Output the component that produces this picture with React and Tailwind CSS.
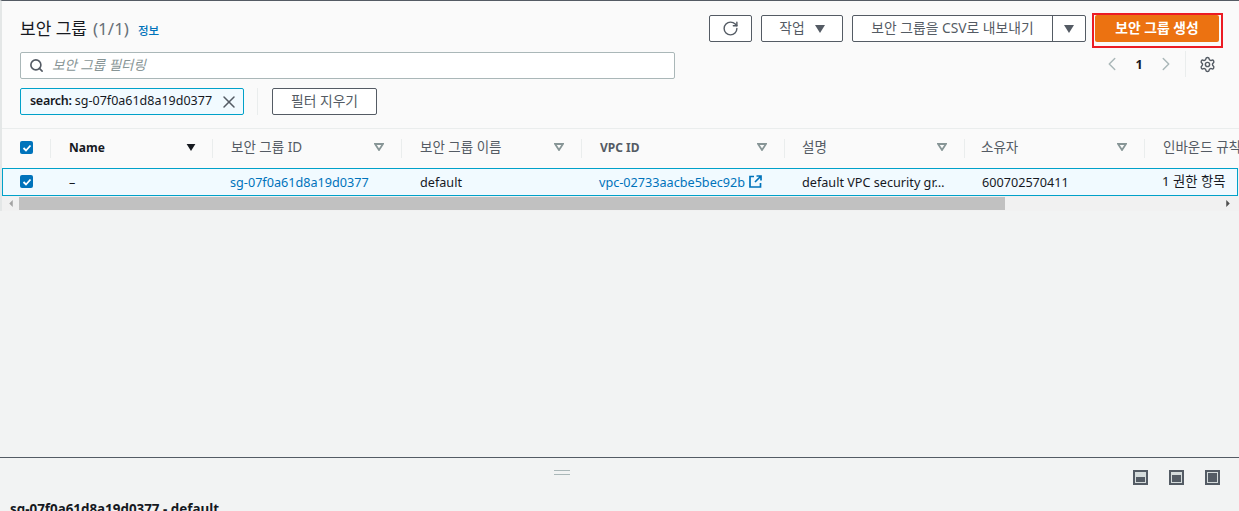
import { RotateCw, Search, X, ChevronLeft, ChevronRight, Settings } from 'lucide-react'

const font = { sans: 'font-["Noto_Sans","Noto_Sans_CJK_KR",sans-serif]' }

const columns = [
  { label: 'Name', width: 'w-[162px]', pad: 'pl-[18px] pr-[16px]', bold: true, active: true },
  { label: '보안 그룹 ID', width: 'w-[189px]', pad: 'pl-[18px] pr-[17px]' },
  { label: '보안 그룹 이름', width: 'w-[180px]', pad: 'pl-[18px] pr-[17px]' },
  { label: 'VPC ID', width: 'w-[203px]', pad: 'pl-[18px] pr-[17px]', semi: true },
  { label: '설명', width: 'w-[180px]', pad: 'pl-[17px] pr-[17px]' },
  { label: '소유자', width: 'w-[180px]', pad: 'pl-[16px] pr-[17px]' },
]

function Caret({ className }) {
  return (
    <svg viewBox="0 0 10 8" className={className}>
      <path d="M0 0h10L5 8z" fill="currentColor" />
    </svg>
  )
}

function SortIcon() {
  return (
    <svg viewBox="0 0 10 8" className="w-[10px] h-[8px] mb-[3px] text-[#879596]">
      <path d="M1 1h8L5 7z" fill="none" stroke="currentColor" strokeWidth="1.8" />
    </svg>
  )
}

function Checkbox({ className = '' }) {
  return (
    <span className={`w-[13px] h-[13px] rounded-[2px] bg-[#0073bb] flex items-center justify-center ${className}`}>
      <svg viewBox="0 0 12 12" className="w-[12px] h-[12px]">
        <path d="M2.5 6l2.5 2.5 4.5-5" fill="none" stroke="white" strokeWidth="1.8" />
      </svg>
    </span>
  )
}

function ExternalIcon() {
  return (
    <svg viewBox="0 0 13 13" className="w-[13px] h-[13px] text-[#0073bb]">
      <path d="M5 1.5H1v10.5h10.5V8M7.5 1H12v4.5M12 1L6 7" fill="none" stroke="currentColor" strokeWidth="1.7" />
    </svg>
  )
}

function PanelIcon({ fill }) {
  return (
    <span className="w-[15px] h-[15px] bg-[#545b64] p-[2px] flex">
      <span className="w-full h-full bg-[#d5dbdb] flex flex-col justify-end">
        <span className={`${fill} bg-[#545b64] mx-px mb-px`} />
      </span>
    </span>
  )
}

export default function App() {
  return (
    <div className={`w-[1239px] h-[511px] overflow-hidden bg-[#f2f3f3] flex flex-col text-[12.65px] text-[#16191f] ${font.sans}`}>
      <div className="border-t border-[#545b64] border-l-2 border-l-[#e4e7e7]">
        {/* Header */}
        <div className="bg-[#fafafa] h-[128px] pl-[18px] pr-[16px] pt-[14px] flex justify-between border-b border-[#eaeded]">
          <div>
            <div className="flex items-baseline h-[24px] mt-[1px]">
              <span className="text-[17px]">보안 그룹</span>
              <span className="text-[17px] text-[#687078] ml-[6px]">(1/1)</span>
              <span className="text-[11.5px] font-medium text-[#0073bb] ml-[9px]">정보</span>
            </div>
            <div className="mt-[12px] w-[655px] h-[27px] border border-[#aab7b8] rounded-[2px] bg-white flex items-center pl-[8px] gap-[8px]">
              <Search size={15} strokeWidth={2.6} className="text-[#545b64]" />
              <span className="italic text-[#879596] text-[13.5px]">보안 그룹 필터링</span>
            </div>
            <div className="mt-[9px] flex items-center">
              <div className="w-[224px] h-[27px] border border-[#00a1c9] bg-[#f1faff] rounded-[2px] flex items-center pl-[9px] pr-[4px] justify-between">
                <span className="whitespace-nowrap text-[12.5px]"><span className="font-semibold tracking-[-0.3px]">search:</span> sg-07f0a61d8a19d0377</span>
                <X size={20} strokeWidth={1.8} className="text-[#545b64]" />
              </div>
              <div className="w-px h-[27px] bg-[#eaeded] ml-[13px]" />
              <button className="ml-[14px] w-[105px] h-[27px] border border-[#545b64] rounded-[2px] bg-white text-[#545b64] text-[13.8px]">필터 지우기</button>
            </div>
          </div>

          <div className="flex flex-col items-end -mt-[2px]">
            <div className="flex items-start">
              <button className="mt-[2px] w-[43px] h-[27px] border border-[#545b64] rounded-[2px] bg-white flex items-center justify-center">
                <RotateCw size={17} strokeWidth={2} className="text-[#545b64]" />
              </button>
              <button className="mt-[2px] ml-[9px] w-[82px] h-[27px] border border-[#545b64] rounded-[2px] bg-white text-[#545b64] text-[13.8px] flex items-center justify-center gap-[10px]">
                작업 <Caret className="w-[10px] h-[8px]" />
              </button>
              <div className="mt-[2px] ml-[9px] h-[27px] border border-[#545b64] rounded-[2px] bg-white text-[#545b64] text-[13.8px] flex items-center">
                <span className="w-[200px] text-center border-r border-[#545b64] h-full leading-[24px]">보안 그룹을 CSV로 내보내기</span>
                <span className="w-[32px] flex justify-center"><Caret className="w-[10px] h-[8px]" /></span>
              </div>
              <div className="ml-[6px] border-2 border-[#ec1c24] pl-px pr-[2px] pb-[4px]">
                <button className="block w-[124px] h-[27px] bg-[#ec7211] rounded-[2px] text-white font-semibold text-[13.8px]">보안 그룹 생성</button>
              </div>
            </div>
            <div className="mt-[3px] flex items-center text-[#aab7b8] pr-[7px]">
              <ChevronLeft size={22} strokeWidth={1.6} />
              <span className="w-[32px] text-center font-bold text-[#16191f]">1</span>
              <ChevronRight size={22} strokeWidth={1.6} />
              <div className="w-px h-[26px] bg-[#eaeded] ml-[8px] mr-[13px]" />
              <Settings size={17} strokeWidth={2} className="text-[#545b64]" />
            </div>
          </div>
        </div>

        {/* Table */}
        <div className="bg-[#fafafa] h-[39px] flex items-center overflow-hidden">
          <div className="w-[49px] shrink-0 border-r border-[#eaeded] h-[19px] pl-[18px]"><Checkbox className="mt-[2px]" /></div>
          {columns.map((c) => (
            <div key={c.label} className={`${c.width} ${c.pad} shrink-0 h-[19px] flex items-center justify-between border-r border-[#eaeded] text-[#545b64]`}>
              <span className={c.bold ? 'mb-[2px] font-bold text-[12px] text-[#16191f]' : c.semi ? 'mb-[2px] font-bold text-[12px]' : 'mb-[2px] text-[13.5px]'}>{c.label}</span>
              {c.active ? <Caret className="w-[10px] h-[7px] mb-[3px] text-[#16191f]" /> : <SortIcon />}
            </div>
          ))}
          <div className="pl-[18px] mb-[2px] shrink-0 text-[#545b64] text-[13.5px] whitespace-nowrap">인바운드 규칙 수</div>
        </div>
        <div className="h-[28px] bg-[#f1faff] border border-[#00a1c9] flex items-center overflow-hidden whitespace-nowrap mr-[1px]">
          <div className="w-[48px] shrink-0 pl-[17px]"><Checkbox className="-mt-[1px]" /></div>
          <div className="w-[162px] shrink-0 pl-[18px]">–</div>
          <div className="w-[189px] shrink-0 pl-[17px] text-[#0073bb]">sg-07f0a61d8a19d0377</div>
          <div className="w-[180px] shrink-0 pl-[18px]">default</div>
          <div className="w-[203px] shrink-0 pl-[17px] text-[#0073bb] flex items-center gap-[4px]">vpc-02733aacbe5bec92b <ExternalIcon /></div>
          <div className="w-[180px] shrink-0 pl-[17px]">default VPC security gr…</div>
          <div className="w-[180px] shrink-0 pl-[17px]">600702570411</div>
          <div className="pl-[17px] text-[13.3px]">1 권한 항목</div>
        </div>

        {/* Scrollbar */}
        <div className="h-[15px] bg-[#f1f1f1] flex items-center">
          <span className="w-[17px] flex justify-center">
            <svg viewBox="0 0 4 8" className="w-[4px] h-[7px] text-[#a3a3a3]"><path d="M4 0v8L0 4z" fill="currentColor" /></svg>
          </span>
          <div className="w-[986px] h-[13px] bg-[#c1c1c1]" />
          <span className="ml-auto mr-[9px] flex">
            <svg viewBox="0 0 4 8" className="w-[4px] h-[7px] text-[#505050]"><path d="M0 0v8l4-4z" fill="currentColor" /></svg>
          </span>
        </div>
      </div>

      <div className="flex-1" />

      {/* Split panel */}
      <div className="h-[54px] border-t border-[#545b64] pl-[10px] relative shrink-0">
        <div className="pt-[12px] pl-[544px]">
          <div className="w-[16px] h-[5px] border-y border-[#aab7b8]" />
        </div>
        <div className="absolute right-[19px] top-[12px] flex gap-[21px]">
          <PanelIcon fill="h-[5px]" />
          <PanelIcon fill="h-[7px]" />
          <PanelIcon fill="h-[9px]" />
        </div>
        <div className="mt-[24px] font-bold text-[13.4px] whitespace-nowrap">sg-07f0a61d8a19d0377 - default</div>
      </div>
    </div>
  )
}
